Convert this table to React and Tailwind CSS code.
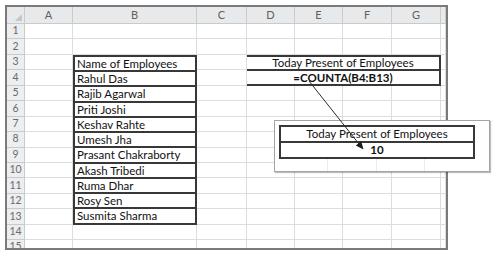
import React from 'react';

const columns = ['A', 'B', 'C', 'D', 'E', 'F', 'G', ''];
const rows = Array.from({ length: 15 }, (_, i) => i + 1);

const employees = [
    'Name of Employees',
    'Rahul Das',
    'Rajib Agarwal',
    'Priti Joshi',
    'Keshav Rahte',
    'Umesh Jha',
    'Prasant Chakraborty',
    'Akash Tribedi',
    'Ruma Dhar',
    'Rosy Sen',
    'Susmita Sharma',
];

// plain grid cell, light gridlines on right and bottom
const Cell = () => <div className="border-r border-b border-[#dcdddf] bg-white" />;

const App = () => {
    return (
        <div className="relative w-[501px] h-[262px] bg-white overflow-hidden [font-family:Lato,sans-serif] text-[#111]">
            <div className="ml-[5px] mt-[5px] w-[443px] h-[245px] border-2 border-[#7a7a7a] overflow-hidden">
                <div className="grid grid-cols-[18px_48px_124px_50px_48px_48px_49px_49px_1fr] grid-rows-[17px_repeat(15,15.45px)]">
                    {/* corner */}
                    <div className="relative bg-[#e8e9eb] border-r border-b border-[#c9cacc]">
                        <div className="absolute right-[2px] bottom-[2px] w-0 h-0 border-l-[7px] border-l-transparent border-b-[7px] border-b-[#c4c6c8]" />
                    </div>
                    {columns.map((c, i) => (
                        <div key={i} className="flex items-center justify-center bg-[#e8e9eb] border-r border-b border-[#c9cacc] text-[11px] text-[#5f5f5f]">
                            {c}
                        </div>
                    ))}

                    {/* B3:B13 employee list */}
                    <div className="col-start-3 row-start-4 row-span-11 flex flex-col border-2 border-[#383838] bg-white divide-y-2 divide-[#383838]">
                        {employees.map((n) => (
                            <div key={n} className="flex-1 flex items-center pl-[2px] text-[11.5px] leading-none">
                                {n}
                            </div>
                        ))}
                    </div>

                    {/* D3:G4 formula block */}
                    <div className="col-start-5 col-span-4 row-start-4 row-span-2 -ml-[2px] flex flex-col border-2 border-[#383838] bg-white divide-y-2 divide-[#383838]">
                        <div className="flex-1 flex items-center justify-center text-[11.5px] leading-none">Today Present of Employees</div>
                        <div className="flex-1 flex items-center justify-center text-[11.5px] leading-none font-bold">=COUNTA(B4:B13)</div>
                    </div>

                    {rows.map((r) => (
                        <React.Fragment key={r}>
                            <div className="flex items-center justify-center bg-[#eceef0] border-r border-b border-[#c9cacc] text-[10.5px] text-[#6a6a6a]">
                                {r}
                            </div>
                            <Cell />
                            {(r < 3 || r > 13) && <Cell />}
                            <Cell />
                            {(r < 3 || r > 4) && (
                                <>
                                    <Cell />
                                    <Cell />
                                    <Cell />
                                    <Cell />
                                </>
                            )}
                            <Cell />
                        </React.Fragment>
                    ))}
                </div>
            </div>

            {/* result callout */}
            <div className="absolute left-[274px] top-[120px] w-[216px] h-[52px] flex flex-col bg-white border border-[#a3a3a3] shadow-[1px_1px_1px_rgba(0,0,0,0.25)]">
                <div className="pl-[4px] pt-[4px]">
                    <div className="w-[196px] h-[34px] flex flex-col border-2 border-[#383838] divide-y-2 divide-[#383838]">
                        <div className="flex-1 flex items-center justify-center text-[11.5px] leading-none">Today Present of Employees</div>
                        <div className="flex-1 flex items-center justify-center text-[11.5px] leading-none font-bold">10</div>
                    </div>
                </div>
                <div className="flex-1 grid grid-cols-[53px_49px_48px_1fr]">
                    <div className="border-r border-[#ededed]" />
                    <div className="border-r border-[#ededed]" />
                    <div className="border-r border-[#ededed]" />
                    <div />
                </div>
            </div>

            {/* precedent arrow */}
            <svg className="absolute inset-0 pointer-events-none" width="501" height="262" viewBox="0 0 501 262">
                <line x1="309" y1="81" x2="359" y2="144" stroke="#2a2a2a" strokeWidth="1" />
                <polygon points="363.5,149.5 355.8,145.6 361.2,141.2" fill="#1a1a1a" />
            </svg>
        </div>
    );
};

export default App;
